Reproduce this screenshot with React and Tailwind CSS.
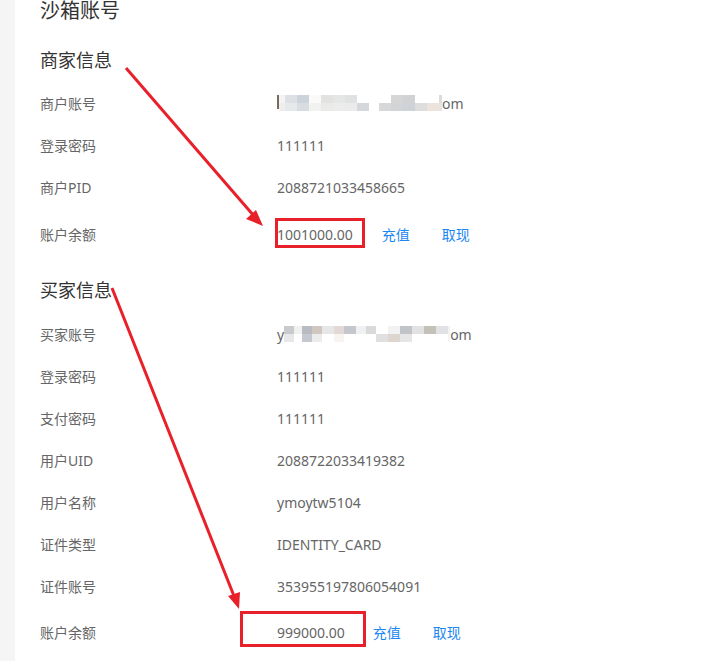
import React from 'react';

const cjk = { fontFamily: '"Noto Sans", "Noto Sans CJK SC", sans-serif' };

// pixelated blur blocks standing in for the masked email
function Masked({ blocks, head, tail }) {
  return (
    <div className="flex items-center h-[20px]">
      {head && <span>{head}</span>}
      <div className="flex items-center h-[16px]">
        {blocks.map((b, i) => (
          <div key={i} className="flex flex-col h-[16px]" style={{ width: b.w }}>
            <div className="h-[8px]" style={{ background: b.t }} />
            <div className="h-[8px]" style={{ background: b.b }} />
          </div>
        ))}
      </div>
      {tail && <span>{tail}</span>}
    </div>
  );
}

const sellerBlocks = [
  { w: 6, t: '#f4f4f4', b: '#eeeeee' },
  { w: 12, t: '#dde0e4', b: '#e6e8ea' },
  { w: 12, t: '#cdd3da', b: '#d9dde2' },
  { w: 12, t: '#fafaf8', b: '#f2f2f0' },
  { w: 12, t: '#e2e2e0', b: '#eaeae8' },
  { w: 12, t: '#e6e6e6', b: '#ececec' },
  { w: 12, t: '#dfe1e3', b: '#ebebeb' },
  { w: 12, t: '#ffffff', b: '#d4d8dc' },
  { w: 10, t: '#ffffff', b: '#ffffff' },
  { w: 12, t: '#ffffff', b: '#d8d8d8' },
  { w: 12, t: '#d6d6d6', b: '#d2d4d6' },
  { w: 12, t: '#d0d2d4', b: '#cfd3d8' },
  { w: 12, t: '#ffffff', b: '#dddddd' },
  { w: 12, t: '#ffffff', b: '#ece4da' },
  { w: 3, t: '#dcdcdc', b: '#e2e4e6' },
];

const buyerBlocks = [
  { w: 10, t: '#c8cacc', b: '#e8e8e8' },
  { w: 8, t: '#f0f0f0', b: '#ffffff' },
  { w: 10, t: '#b8bcc2', b: '#c4c8d0' },
  { w: 10, t: '#cfc7c0', b: '#ececec' },
  { w: 12, t: '#e6e8e8', b: '#ffffff' },
  { w: 10, t: '#e2d8d6', b: '#f8f4f0' },
  { w: 12, t: '#c4c8cc', b: '#ffffff' },
  { w: 10, t: '#eef0f2', b: '#ffffff' },
  { w: 10, t: '#d8dadc', b: '#ffffff' },
  { w: 12, t: '#ffffff', b: '#e0e0e0' },
  { w: 12, t: '#f2f2f2', b: '#ddd6cf' },
  { w: 12, t: '#c0c4c8', b: '#e6e6e6' },
  { w: 12, t: '#e2e2e2', b: '#ffffff' },
  { w: 12, t: '#c4c0ba', b: '#ffffff' },
  { w: 12, t: '#e0e2e6', b: '#ffffff' },
  { w: 2, t: '#f2f2f2', b: '#f4f4f4' },
];

function Row({ label, children, tall }) {
  return (
    <div className={`flex items-center ${tall || 'h-[42px]'}`}>
      <div className="w-[237px] text-[14px] text-[#666]">{label}</div>
      <div className="flex items-center text-[14px] text-[#666]">{children}</div>
    </div>
  );
}

function Actions({ gap, first }) {
  return (
    <div className="flex items-center text-[14px] text-[#1c86f2]" style={{ marginLeft: first }}>
      <span>充值</span>
      <span style={{ marginLeft: gap }}>取现</span>
    </div>
  );
}

export default function App() {
  return (
    <div className="relative flex w-[707px] h-[661px] overflow-hidden bg-white" style={cjk}>
      <div className="w-[15px] shrink-0 bg-[#f5f5f5]" />
      <div className="flex-1 pl-[25px]">
        <div className="h-[22px] leading-[22px] text-[20px] text-[#333]">沙箱账号</div>

        <div className="mt-[24px] h-[28px] leading-[28px] text-[18px] text-[#333]">商家信息</div>
        <div className="mt-[8px]">
          <Row label="商户账号">
            <Masked blocks={sellerBlocks} head={<span className="inline-block w-[2px] h-[14px] bg-[#7a6a5a]" />} tail="om" />
          </Row>
          <Row label="登录密码">111111</Row>
          <Row label="商户PID">2088721033458665</Row>
          <Row label="账户余额" tall="h-[53px]">
            <span>1001000.00</span>
            <Actions first="29px" gap="32px" />
          </Row>
        </div>

        <div className="mt-[15px] h-[28px] leading-[28px] text-[18px] text-[#333]">买家信息</div>
        <div className="mt-[9px]">
          <Row label="买家账号">
            <Masked blocks={buyerBlocks} head="y" tail="om" />
          </Row>
          <Row label="登录密码">111111</Row>
          <Row label="支付密码">111111</Row>
          <Row label="用户UID">2088722033419382</Row>
          <Row label="用户名称">ymoytw5104</Row>
          <Row label="证件类型">IDENTITY_CARD</Row>
          <Row label="证件账号">353955197806054091</Row>
          <Row label="账户余额" tall="h-[50px]">
            <span>999000.00</span>
            <Actions first="28px" gap="32px" />
          </Row>
        </div>
      </div>

      {/* annotation overlay */}
      <svg className="absolute inset-0 pointer-events-none" width="707" height="661">
        <g stroke="#e8202a" strokeWidth="3" fill="none">
          <rect x="276.5" y="219.5" width="87" height="27" />
          <rect x="241.5" y="612.5" width="123" height="33" />
          <line x1="126" y1="68" x2="254" y2="216" />
          <line x1="112" y1="288" x2="234" y2="596" />
        </g>
        <g fill="#e8202a">
          <polygon points="263,226 246,219 256,210" />
          <polygon points="239,609 228,596 240,592" />
        </g>
      </svg>
    </div>
  );
}
